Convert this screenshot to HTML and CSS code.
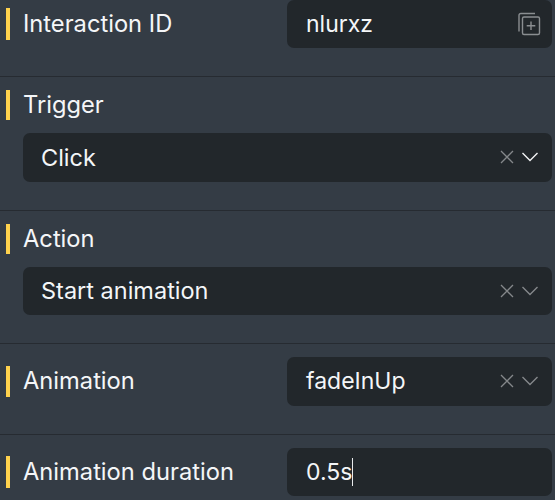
FILE: index.html
```html
<!DOCTYPE html>
<html lang="en">
<head>
<meta charset="utf-8">
<title>Interaction settings</title>
<link rel="stylesheet" href="styles.css">
</head>
<body>
<main class="panel">
  <section class="row row-inline">
    <label class="label">Interaction ID</label>
    <div class="field field-half">
      <span class="value">nlurxz</span>
      <svg class="icon-copy" viewBox="0 0 24 24" width="24" height="24" fill="none" stroke="#8a8e91" stroke-width="1.4">
        <path d="M2 19.5V3.5Q2 1.5 4 1.5H18"/>
        <rect x="5.5" y="5" width="17" height="17.5" rx="1.5"/>
        <path d="M14 9.5V18M9.7 13.8H18.3"/>
      </svg>
    </div>
  </section>
  <section class="row row-stacked">
    <label class="label">Trigger</label>
    <div class="field field-full">
      <span class="value">Click</span>
      <svg class="icon-x" viewBox="0 0 14 14" width="14" height="14" fill="none" stroke="#85888b" stroke-width="1.3"><path d="M1 1L13 13M13 1L1 13"/></svg>
      <svg class="icon-chev" viewBox="0 0 16 10" width="16" height="10" fill="none" stroke="#f2f3f4" stroke-width="1.4"><path d="M.5 1L8 8.5L15.5 1"/></svg>
    </div>
  </section>
  <section class="row row-stacked">
    <label class="label">Action</label>
    <div class="field field-full">
      <span class="value">Start animation</span>
      <svg class="icon-x" viewBox="0 0 14 14" width="14" height="14" fill="none" stroke="#85888b" stroke-width="1.3"><path d="M1 1L13 13M13 1L1 13"/></svg>
      <svg class="icon-chev" viewBox="0 0 16 10" width="16" height="10" fill="none" stroke="#85888b" stroke-width="1.4"><path d="M.5 1L8 8.5L15.5 1"/></svg>
    </div>
  </section>
  <section class="row row-inline">
    <label class="label">Animation</label>
    <div class="field field-half">
      <span class="value">fadeInUp</span>
      <svg class="icon-x" viewBox="0 0 14 14" width="14" height="14" fill="none" stroke="#85888b" stroke-width="1.3"><path d="M1 1L13 13M13 1L1 13"/></svg>
      <svg class="icon-chev" viewBox="0 0 16 10" width="16" height="10" fill="none" stroke="#85888b" stroke-width="1.4"><path d="M.5 1L8 8.5L15.5 1"/></svg>
    </div>
  </section>
  <section class="row row-inline">
    <label class="label">Animation duration</label>
    <div class="field field-half">
      <span class="value">0.5s</span><span class="caret"></span>
    </div>
  </section>
</main>
</body>
</html>
```
FILE: styles.css
```css
* { box-sizing: border-box; }
html, body { margin: 0; height: 100%; overflow: hidden; background: #343c45; }
.panel {
  margin-top: -13.5px;
  font-family: Inter, "Liberation Sans", sans-serif;
  color: #f4f6f8;
}
.row {
  padding: 13px 3px 28px 6px;
  border-bottom: 1px solid #262b31;
}
.row:last-child { border-bottom: 0; }
.row-inline { display: flex; align-items: center; justify-content: space-between; }
.row-stacked { display: flex; flex-direction: column; gap: 13px; }
.label {
  display: flex;
  align-items: center;
  height: 30px;
  padding-left: 13px;
  border-left: 4px solid #ffd24d;
  font-size: 23.7px;
  line-height: 30px;
}
.row-inline .label { height: 31.5px; }
.field {
  display: flex;
  align-items: center;
  height: 48.5px;
  padding: 0 20px 0 19px;
  border-radius: 7px;
  background: #22272b;
  font-size: 23px;
}
.field-full { margin-left: 17px; padding-left: 18px; font-size: 23.5px; }
.field-half { width: 265px; }
.value { flex: 0 0 auto; }
.icon-copy { margin-left: auto; margin-right: -9px; }
.icon-x { margin-left: auto; }
.icon-chev { margin-left: 8px; margin-right: -6px; }
.caret { width: 1px; height: 28px; background: #e8eaec; }
```
